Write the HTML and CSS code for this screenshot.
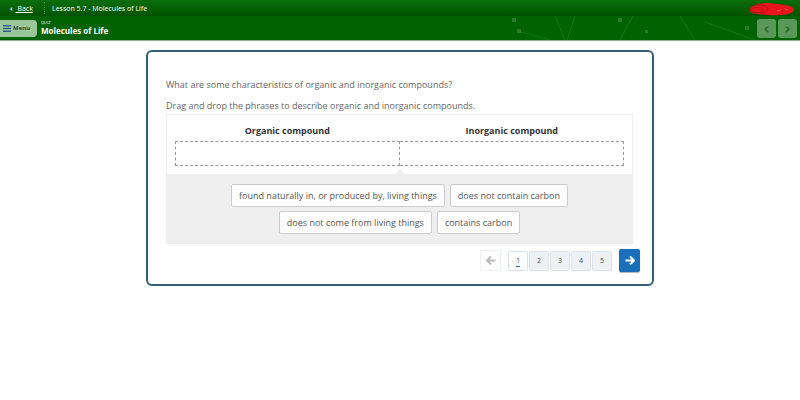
FILE: index.html
```html
<!DOCTYPE html>
<html lang="en">
<head>
    <meta charset="UTF-8">
    <title>Molecules of Life</title>
    <link rel="stylesheet" href="styles.css">
</head>
<body>
    <div class="topbar">
        <a class="back-link" href="#"><span class="back-arrow">‹</span> Back</a>
        <span class="divider"></span>
        <span class="lesson-title">Lesson 5.7 - Molecules of Life</span>
        <svg class="scribble" width="50" height="16" viewBox="0 0 50 16">
            <path d="M3 8 C6 2 20 1 30 3 C40 4 48 5 47 9 C46 14 30 15 20 14 C10 13 1 13 3 8 Z" fill="#e8141b"/>
            <ellipse cx="12" cy="8" rx="9" ry="4" fill="none" stroke="#a81515" stroke-width="0.8"/>
            <ellipse cx="10" cy="9" rx="6" ry="2.5" fill="none" stroke="#a81515" stroke-width="0.6"/>
            <path d="M30 10 L34 9 M38 8 L41 9" stroke="#f88" stroke-width="0.6"/>
        </svg>
    </div>
    <div class="subbar">
        <button class="menu-btn">
            <svg width="8" height="7" viewBox="0 0 8 7"><rect y="0" width="8" height="1.4" fill="#2a5a8a"/><rect y="2.8" width="8" height="1.4" fill="#2a5a8a"/><rect y="5.6" width="8" height="1.4" fill="#2a5a8a"/></svg>
            Menu
        </button>
        <div class="quiz-title">
            <span class="quiz-label">QUIZ</span>
            <span class="quiz-name">Molecules of Life</span>
        </div>
        <svg class="lines" width="260" height="24" viewBox="0 0 260 24">
            <line x1="50" y1="0" x2="60" y2="24" stroke="#0c7a0c" stroke-width="1"/>
            <line x1="70" y1="0" x2="62" y2="24" stroke="#0c7a0c" stroke-width="1"/>
            <line x1="13" y1="15" x2="45" y2="24" stroke="#0c7a0c" stroke-width="1"/>
            <line x1="128" y1="0" x2="115" y2="24" stroke="#0c7a0c" stroke-width="1"/>
            <line x1="175" y1="0" x2="190" y2="24" stroke="#0c7a0c" stroke-width="1"/>
            <line x1="200" y1="6" x2="250" y2="24" stroke="#0c7a0c" stroke-width="1"/>
            <rect x="7" y="2" width="4" height="4" fill="#2a7a2a"/>
            <rect x="12" y="13" width="4" height="4" fill="#2a7a2a"/>
            <rect x="113" y="2" width="4" height="4" fill="#2a7a2a"/>
            <rect x="140" y="14" width="3" height="3" fill="#2a7a2a"/>
            <rect x="240" y="10" width="4" height="4" fill="#2a7a2a"/>
        </svg>
        <div class="nav-btns">
            <button class="nav-btn">‹</button>
            <button class="nav-btn">›</button>
        </div>
    </div>

    <div class="page">
        <div class="card">
            <p class="question">What are some characteristics of organic and inorganic compounds?</p>
            <p class="instruction">Drag and drop the phrases to describe organic and inorganic compounds.</p>
            <div class="dnd">
                <div class="targets">
                    <div class="column">
                        <div class="column-title">Organic compound</div>
                        <div class="dropzone"></div>
                    </div>
                    <div class="column">
                        <div class="column-title">Inorganic compound</div>
                        <div class="dropzone right"></div>
                    </div>
                </div>
                <div class="bank">
                    <div class="chip-row">
                        <span class="chip">found naturally in, or produced by, living things</span>
                        <span class="chip">does not contain carbon</span>
                    </div>
                    <div class="chip-row">
                        <span class="chip">does not come from living things</span>
                        <span class="chip">contains carbon</span>
                    </div>
                </div>
            </div>
            <div class="pager">
                <button class="pg-arrow prev">
                    <svg width="10" height="9" viewBox="0 0 10 9"><path d="M5 0.5 L1 4.5 L5 8.5 M1 4.5 H9.5" stroke="#bbb" stroke-width="2" fill="none"/></svg>
                </button>
                <div class="pages">
                    <button class="pg current">1</button>
                    <button class="pg">2</button>
                    <button class="pg">3</button>
                    <button class="pg">4</button>
                    <button class="pg">5</button>
                </div>
                <button class="pg-arrow next">
                    <svg width="10" height="9" viewBox="0 0 10 9"><path d="M5 0.5 L9 4.5 L5 8.5 M9 4.5 H0.5" stroke="#fff" stroke-width="2" fill="none"/></svg>
                </button>
            </div>
        </div>
    </div>
</body>
</html>
```

FILE: styles.css
```css
body {
    margin: 0;
    font-family: "Open Sans", "Liberation Sans", sans-serif;
    background-color: #fff;
}
.topbar {
    position: relative;
    height: 16px;
    background: linear-gradient(#0b6e0b, #005300);
    display: flex;
    align-items: center;
    padding-left: 10px;
    color: #fff;
    font-size: 7px;
}
.back-link {
    color: #fff;
    text-decoration: underline;
    width: 26px;
}
.back-arrow {
    font-weight: bold;
    margin-right: 3px;
    text-decoration: none;
    display: inline-block;
}
.divider {
    width: 0;
    height: 12px;
    border-left: 1px dotted #3a8a3a;
    margin: 0 7px 0 8px;
}
.scribble {
    position: absolute;
    right: 3px;
    top: 1px;
}
.subbar {
    position: relative;
    height: 24px;
    background-color: #006200;
    display: flex;
    align-items: center;
    border-bottom: 1px solid #8fb38f;
}
.menu-btn {
    height: 17px;
    width: 37px;
    margin-left: 0;
    border: none;
    border-radius: 0 4px 4px 0;
    background-color: #9bc59b;
    color: #2d4a2d;
    font-family: inherit;
    font-size: 6px;
    font-weight: bold;
    padding: 0 3px;
    display: flex;
    align-items: center;
    gap: 2px;
}
.quiz-title {
    display: flex;
    flex-direction: column;
    margin-left: 4px;
    color: #fff;
    line-height: 1;
}
.quiz-label {
    font-size: 4px;
}
.quiz-name {
    font-size: 8px;
    font-weight: bold;
    margin-top: 2px;
}
.lines {
    position: absolute;
    left: 505px;
    top: 0;
}
.nav-btns {
    position: relative;
    margin-left: auto;
    margin-right: 3px;
    display: flex;
    gap: 2px;
}
.nav-btn {
    width: 19px;
    height: 19px;
    border: none;
    border-radius: 3px;
    background-color: rgba(255, 255, 255, 0.35);
    color: #2f6a2f;
    font-size: 16px;
    font-weight: bold;
    line-height: 17px;
    padding: 0;
    font-family: "DejaVu Sans", sans-serif;
}
.page {
    padding-top: 9px;
    display: flex;
    justify-content: center;
}
.card {
    width: 467px;
    height: 196px;
    border: 2px solid #325f7a;
    border-radius: 6px;
    padding: 26px 19px 10px 18px;
    color: #666;
    font-size: 9px;
}
.question {
    margin: 0 0 8px;
}
.instruction {
    margin: 0 0 2px;
}
.dnd {
    border: 1px solid #eee;
}
.targets {
    display: flex;
    padding: 4px 8px 8px 8px;
    background-color: #fff;
}
.column {
    flex: 1;
}
.column-title {
    text-align: center;
    font-weight: bold;
    color: #333;
    margin: 5px 0 4px;
}
.dropzone {
    height: 23px;
    border: 1px dashed #999;
}
.dropzone.right {
    border-left: none;
}
.bank {
    position: relative;
    background-color: #efefef;
    padding: 10px 0 9px;
    display: flex;
    flex-direction: column;
    align-items: center;
    gap: 4px;
}
.bank::before {
    content: "";
    position: absolute;
    top: -5px;
    left: 228px;
    border-left: 5px solid transparent;
    border-right: 5px solid transparent;
    border-bottom: 5px solid #efefef;
}
.chip-row {
    display: flex;
    gap: 5px;
}
.chip {
    background-color: #fff;
    border: 1px solid #ccc;
    border-radius: 2px;
    padding: 4px 7px;
    color: #555;
}
.pager {
    display: flex;
    justify-content: flex-end;
    align-items: center;
    margin-top: 5px;
    margin-right: -7px;
    gap: 7px;
}
.pg-arrow {
    width: 21px;
    height: 21px;
    border: 1px solid #f0f0f0;
    border-radius: 2px;
    background-color: #fff;
    padding: 0;
    display: flex;
    align-items: center;
    justify-content: center;
}
.pg-arrow.next {
    width: 21px;
    height: 23px;
    border: none;
    background-color: #1a6fba;
    box-shadow: 0 1px 1px rgba(0, 0, 0, 0.3);
}
.pages {
    display: flex;
    gap: 1px;
}
.pg {
    width: 20px;
    height: 20px;
    border: 1px solid #dde3ea;
    border-radius: 2px;
    background-color: #eef1f4;
    color: #444;
    font-family: inherit;
    font-size: 7px;
    padding: 0;
}
.pg.current {
    background-color: #fff;
    text-decoration: underline;
    text-decoration-color: #1a6fba;
    text-underline-offset: 3px;
}
```
